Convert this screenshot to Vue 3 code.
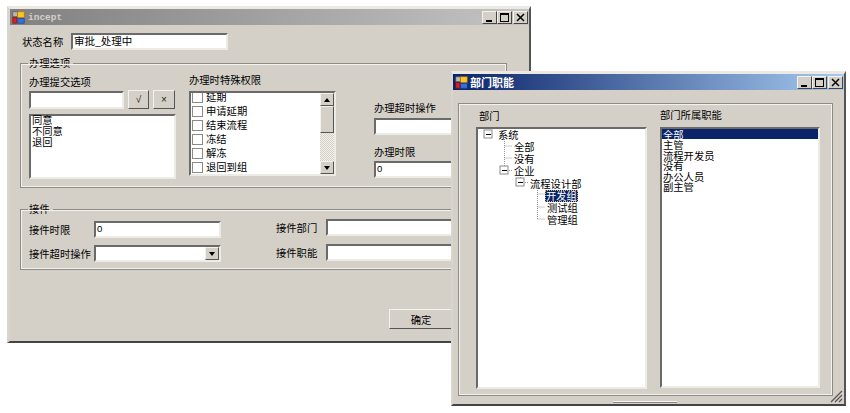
<template>
  <div class="desktop">
    <!-- 主窗口 -->
    <div class="win win-main">
      <div class="titlebar titlebar-off">
        <svg class="app-icon" width="13" height="13" viewBox="0 0 16 16">
          <rect x="1" y="1" width="6" height="6" fill="#b8b8b8" stroke="#555" stroke-width=".8" />
          <rect x="7" y="1" width="8" height="7" fill="#f8c820" stroke="#c07010" stroke-width=".8" />
          <rect x="1" y="8" width="5" height="7" fill="#d82020" stroke="#801010" stroke-width=".8" />
          <rect x="7" y="9" width="8" height="6" fill="#3070e0" stroke="#204090" stroke-width=".8" />
        </svg>
        <span class="title-en">incept</span>
        <div class="caption-btns">
          <button class="cap-btn"><svg width="9" height="9" viewBox="0 0 9 9"><rect x="1" y="7" width="6" height="2" /></svg></button>
          <button class="cap-btn"><svg width="9" height="9" viewBox="0 0 9 9"><path d="M0 0h9v9H0zM1 2v6h7V2z" fill-rule="evenodd" /></svg></button>
          <button class="cap-btn cap-close"><svg width="9" height="9" viewBox="0 0 9 9"><path d="M1 1l7 7M8 1L1 8" stroke="#000" stroke-width="1.5" /></svg></button>
        </div>
      </div>

      <div class="main-body">
        <div class="name-row">
          <span class="name-label">状态名称</span>
          <div class="sunken name-input">审批_处理中</div>
        </div>

        <div class="group group-handle">
          <span class="legend">办理选项</span>
          <div class="handle-grid">
            <div class="col-submit">
              <div class="lbl">办理提交选项</div>
              <div class="submit-row">
                <div class="sunken submit-input"></div>
                <button class="raised small-btn">√</button>
                <button class="raised small-btn btn-x">×</button>
              </div>
              <div class="sunken list submit-list">
                <div v-for="item in submitOptions" :key="item" class="list-item">{{ item }}</div>
              </div>
            </div>

            <div class="col-perm">
              <div class="lbl">办理时特殊权限</div>
              <div class="sunken perm-list">
                <div class="perm-items">
                  <label v-for="item in permissions" :key="item" class="perm-item">
                    <span class="check"></span>{{ item }}
                  </label>
                </div>
                <div class="scrollbar">
                  <div class="raised scroll-btn"><span class="arrow-up"></span></div>
                  <div class="raised scroll-thumb"></div>
                  <div class="scroll-track"></div>
                  <div class="raised scroll-btn"><span class="arrow-down"></span></div>
                </div>
              </div>
            </div>

            <div class="col-timeout">
              <div class="lbl">办理超时操作</div>
              <div class="sunken timeout-input"></div>
              <div class="lbl lbl-limit">办理时限</div>
              <div class="sunken timeout-input value">0</div>
            </div>
          </div>
        </div>

        <div class="group group-receive">
          <span class="legend">接件</span>
          <div class="receive-grid">
            <div class="receive-left">
              <div class="field-row">
                <span class="field-lbl">接件时限</span>
                <div class="sunken field-input value">0</div>
              </div>
              <div class="field-row">
                <span class="field-lbl">接件超时操作</span>
                <div class="sunken field-input combo">
                  <div class="raised combo-btn"><span class="arrow-down"></span></div>
                </div>
              </div>
            </div>
            <div class="receive-right">
              <div class="field-row">
                <span class="field-lbl-r">接件部门</span>
                <div class="sunken field-input-r"></div>
              </div>
              <div class="field-row">
                <span class="field-lbl-r">接件职能</span>
                <div class="sunken field-input-r"></div>
              </div>
            </div>
          </div>
        </div>

        <button class="raised ok-btn">确定</button>
      </div>
    </div>

    <!-- 部门职能 -->
    <div class="win win-dept">
      <div class="titlebar titlebar-on">
        <svg class="app-icon" width="13" height="13" viewBox="0 0 16 16">
          <rect x="1" y="1" width="6" height="6" fill="#b8b8b8" stroke="#555" stroke-width=".8" />
          <rect x="7" y="1" width="8" height="7" fill="#f8c820" stroke="#c07010" stroke-width=".8" />
          <rect x="1" y="8" width="5" height="7" fill="#d82020" stroke="#801010" stroke-width=".8" />
          <rect x="7" y="9" width="8" height="6" fill="#3070e0" stroke="#204090" stroke-width=".8" />
        </svg>
        <span class="title-cn">部门职能</span>
        <div class="caption-btns">
          <button class="cap-btn"><svg width="9" height="9" viewBox="0 0 9 9"><rect x="1" y="7" width="6" height="2" /></svg></button>
          <button class="cap-btn"><svg width="9" height="9" viewBox="0 0 9 9"><path d="M0 0h9v9H0zM1 2v6h7V2z" fill-rule="evenodd" /></svg></button>
          <button class="cap-btn cap-close"><svg width="9" height="9" viewBox="0 0 9 9"><path d="M1 1l7 7M8 1L1 8" stroke="#000" stroke-width="1.5" /></svg></button>
        </div>
      </div>

      <div class="dept-body">
        <div class="group dept-group">
          <div class="dept-col dept-col-tree">
            <div class="lbl dept-lbl">部门</div>
            <div class="sunken tree">
              <svg class="tree-lines" width="166" height="110" viewBox="0 0 166 110">
                <g stroke="#999" stroke-dasharray="1 1" fill="none">
                  <path d="M26.5 8V39M26.5 17H34M26.5 29H34" />
                  <path d="M31 41.5H35M47 53.5H51" />
                  <path d="M42.5 46V50M59.5 59V90M59.5 65H67M59.5 78H67M59.5 90H67" />
                </g>
                <g v-for="b in expanders" :key="b.x">
                  <rect :x="b.x - 4" :y="b.y - 4" width="8" height="8" fill="#fff" stroke="#8a8a8a" />
                  <path :d="`M${b.x - 2} ${b.y + 0.5}h5`" stroke="#000" />
                </g>
              </svg>
              <div
                v-for="node in treeNodes"
                :key="node.name"
                class="tree-row"
                :style="{ paddingLeft: node.indent + 'px' }"
              >
                <span class="tree-text" :class="{ 'tree-selected': node.selected }">{{ node.name }}</span>
              </div>
            </div>
          </div>
          <div class="dept-col dept-col-list">
            <div class="lbl dept-lbl-r">部门所属职能</div>
            <div class="sunken duty-list">
              <div
                v-for="(item, i) in duties"
                :key="item"
                class="duty-item"
                :class="{ 'duty-selected': i === 0 }"
              >{{ item }}</div>
            </div>
          </div>
        </div>
      </div>

      <span class="bottom-bar"></span>
      <svg class="grip" width="13" height="13" viewBox="0 0 13 13">
        <path d="M1 12L12 1M5 12l7-7M9 12l3-3" stroke="#555" stroke-width="1.2" />
      </svg>
    </div>
  </div>
</template>

<script setup>
const submitOptions = ['同意', '不同意', '退回']
const permissions = ['延期', '申请延期', '结束流程', '冻结', '解冻', '退回到组']
const duties = ['全部', '主管', '流程开发员', '没有', '办公人员', '副主管']

const treeNodes = [
  { name: '系统', indent: 19 },
  { name: '全部', indent: 35 },
  { name: '没有', indent: 35 },
  { name: '企业', indent: 35 },
  { name: '流程设计部', indent: 51 },
  { name: '开发组', indent: 67, selected: true },
  { name: '测试组', indent: 68 },
  { name: '管理组', indent: 68 }
]

// 展开按钮的圆心，相对树控件内部
const expanders = [
  { x: 10, y: 5 },
  { x: 26, y: 41 },
  { x: 42, y: 53 }
]
</script>

<style>
html,
body {
  margin: 0;
  background: #fff;
}
</style>

<style scoped>
.desktop {
  position: relative;
  width: 850px;
  height: 413px;
  overflow: hidden;
  background: #fff;
  font-family: "Noto Sans CJK SC", "Liberation Sans", sans-serif;
  font-size: 10.3px;
  color: #000;
}

.win {
  position: absolute;
  box-sizing: border-box;
  background: #d4d0c8;
  border-style: solid;
  border-width: 3px;
  border-color: #ece9e2 #555 #444 #d8d5ce;
}

.win-main {
  left: 7px;
  top: 6px;
  width: 524px;
  height: 337px;
  border-width: 3px 2px 2px 3px;
}

.win-dept {
  left: 451px;
  top: 71px;
  width: 395px;
  height: 335px;
  border-width: 3px 2px 2px 2px;
}

.titlebar {
  display: flex;
  align-items: center;
  height: 16px;
  padding-left: 2px;
}

.titlebar-off {
  background: linear-gradient(90deg, #808080, #c4c4c4);
}

.titlebar-on {
  background: linear-gradient(90deg, #0a246a, #a6caf0);
}

.app-icon {
  flex-shrink: 0;
}

.title-en {
  margin-left: 3px;
  font-family: "Liberation Mono", monospace;
  font-size: 9.5px;
  font-weight: bold;
  color: #d4d0c8;
}

.title-cn {
  margin-left: 2px;
  font-size: 11px;
  font-weight: bold;
  color: #fff;
}

.caption-btns {
  display: flex;
  margin-left: auto;
  margin-right: 1px;
}

.cap-btn {
  box-sizing: border-box;
  display: flex;
  align-items: center;
  justify-content: center;
  width: 15px;
  height: 13px;
  padding: 0;
  background: #d4d0c8;
  border: 1px solid;
  border-color: #f4f2ee #444 #444 #f4f2ee;
}

.cap-close {
  margin-left: 1px;
}

.sunken {
  box-sizing: border-box;
  background: #fff;
  border: 2px solid;
  border-color: #6a6a6a #ecebe6 #ecebe6 #6a6a6a;
}

.raised {
  box-sizing: border-box;
  background: #d4d0c8;
  border: 1px solid;
  border-color: #f4f2ee #555 #555 #f4f2ee;
}

.main-body {
  padding: 8px 0 0 10px;
}

.name-row {
  display: flex;
  align-items: center;
  padding-left: 2px;
}

.name-label {
  width: 49px;
}

.name-input {
  width: 157px;
  height: 17px;
  padding-left: 1px;
  line-height: 12px;
  font-size: 10.5px;
}

.group {
  box-sizing: border-box;
  border: 1px solid #8c8a85;
  outline: 1px solid #f4f2ee;
  outline-offset: -2px;
}

.legend {
  display: block;
  width: fit-content;
  height: 12px;
  margin: -7px 0 0 7px;
  padding: 0 3px 0 1px;
  line-height: 12px;
  background: #d4d0c8;
}

.group-handle {
  width: 487px;
  height: 125px;
  margin-top: 13px;
}

.handle-grid {
  display: grid;
  grid-template-columns: 147px 147px 120px;
  column-gap: 13px;
  padding: 6px 0 0 8px;
}

.lbl {
  height: 14px;
  line-height: 14px;
}

.submit-row {
  display: flex;
  align-items: center;
  margin-top: 1px;
}

.submit-input {
  width: 95px;
  height: 18px;
}

.small-btn {
  width: 21px;
  height: 19px;
  margin-left: 4px;
  padding: 0;
  font-size: 10px;
  font-family: "Liberation Sans", sans-serif;
  color: #222;
}

.btn-x {
  margin-left: 4px;
  width: 22px;
}

.list {
  margin-top: 5px;
}

.submit-list {
  height: 65px;
  padding: 0 1px;
}

.list-item {
  height: 11px;
  line-height: 11px;
  position: relative;
  top: -2px;
}

.col-perm {
  margin-top: -2px;
}

.perm-list {
  display: flex;
  height: 85px;
  margin-top: 4px;
  overflow: hidden;
}

.perm-items {
  flex: 1;
  margin-top: -4px;
  padding-left: 1px;
}

.perm-item {
  display: flex;
  align-items: center;
  height: 14px;
}

.check {
  box-sizing: border-box;
  width: 11px;
  height: 11px;
  margin: 3px 3px 0 0;
  border: 1px solid #8c8a85;
  background: #fff;
}

.scrollbar {
  display: flex;
  flex-direction: column;
  width: 14px;
  margin-right: 0;
}

.scroll-btn {
  display: flex;
  align-items: center;
  justify-content: center;
  height: 13px;
  flex-shrink: 0;
}

.scroll-thumb {
  height: 27px;
  flex-shrink: 0;
}

.scroll-track {
  flex: 1;
  background: repeating-conic-gradient(#d4d0c8 0 25%, #f2f0ec 0 50%) 0 0 / 2px 2px;
}

.arrow-up,
.arrow-down {
  width: 0;
  height: 0;
  border-left: 3px solid transparent;
  border-right: 3px solid transparent;
}

.arrow-up {
  border-bottom: 4px solid #000;
}

.arrow-down {
  border-top: 4px solid #000;
}

.col-timeout {
  padding: 26px 0 0 25px;
}

.timeout-input {
  width: 95px;
  height: 17px;
  margin-top: 3px;
}

.lbl-limit {
  margin-top: 10px;
}

.lbl-limit + .timeout-input {
  margin-top: 2px;
}

.value {
  padding-left: 1px;
  line-height: 12px;
  font-family: "Liberation Sans", sans-serif;
  font-size: 9.5px;
}

.group-receive {
  width: 487px;
  height: 61px;
  margin-top: 21px;
}

.receive-grid {
  display: grid;
  grid-template-columns: 192px 1fr;
  column-gap: 55px;
  padding: 3px 0 0 8px;
}

.receive-left,
.receive-right {
  display: flex;
  flex-direction: column;
}

.receive-left {
  gap: 7px;
  padding-top: 3px;
}

.receive-right {
  gap: 8px;
  padding-top: 1px;
}

.field-row {
  display: flex;
  align-items: center;
}

.field-lbl {
  width: 65px;
  flex-shrink: 0;
  white-space: nowrap;
}

.field-input {
  width: 127px;
  height: 17px;
}

.combo {
  display: flex;
  justify-content: flex-end;
  align-items: stretch;
  padding: 0;
}

.combo-btn {
  display: flex;
  align-items: center;
  justify-content: center;
  width: 14px;
}

.field-lbl-r {
  width: 50px;
  flex-shrink: 0;
}

.field-input-r {
  width: 130px;
  height: 17px;
}

.ok-btn {
  display: block;
  width: 64px;
  height: 20px;
  margin: 39px 0 0 369px;
  padding: 0;
  font: inherit;
  color: #000;
}

.dept-body {
  padding: 13px 0 0 5px;
}

.dept-group {
  display: flex;
  width: 375px;
  height: 293px;
}

.dept-col-tree {
  padding: 5px 0 0 17px;
}

.dept-lbl {
  margin-left: 3px;
}

.tree {
  position: relative;
  width: 171px;
  height: 262px;
  margin-top: 4px;
}

.tree-lines {
  position: absolute;
  left: 0;
  top: 0;
}

.tree-row {
  position: relative;
  height: 12.15px;
  line-height: 12px;
}

.tree-text {
  display: inline-block;
  padding: 0 1px;
}

.tree-selected {
  background: #0a246a;
  color: #fff;
  outline: 1px dotted #c8b070;
  outline-offset: -1px;
}

.dept-col-list {
  padding: 4px 0 0 13px;
}

.dept-lbl-r {
  height: 15px;
}

.duty-list {
  width: 160px;
  height: 261px;
  margin-top: 4px;
}

.duty-item {
  height: 10.4px;
  line-height: 11px;
  padding-left: 1px;
  white-space: nowrap;
}

.duty-selected {
  height: 10.4px;
  background: #0a246a;
  color: #fff;
}

.bottom-bar {
  position: absolute;
  left: 160px;
  bottom: 1px;
  width: 64px;
  height: 1px;
  background: #f4f2ee;
  border-bottom: 1px solid #888;
}

.grip {
  position: absolute;
  right: 1px;
  bottom: 1px;
}

.cap-btn svg {
  fill: #000;
}
</style>
